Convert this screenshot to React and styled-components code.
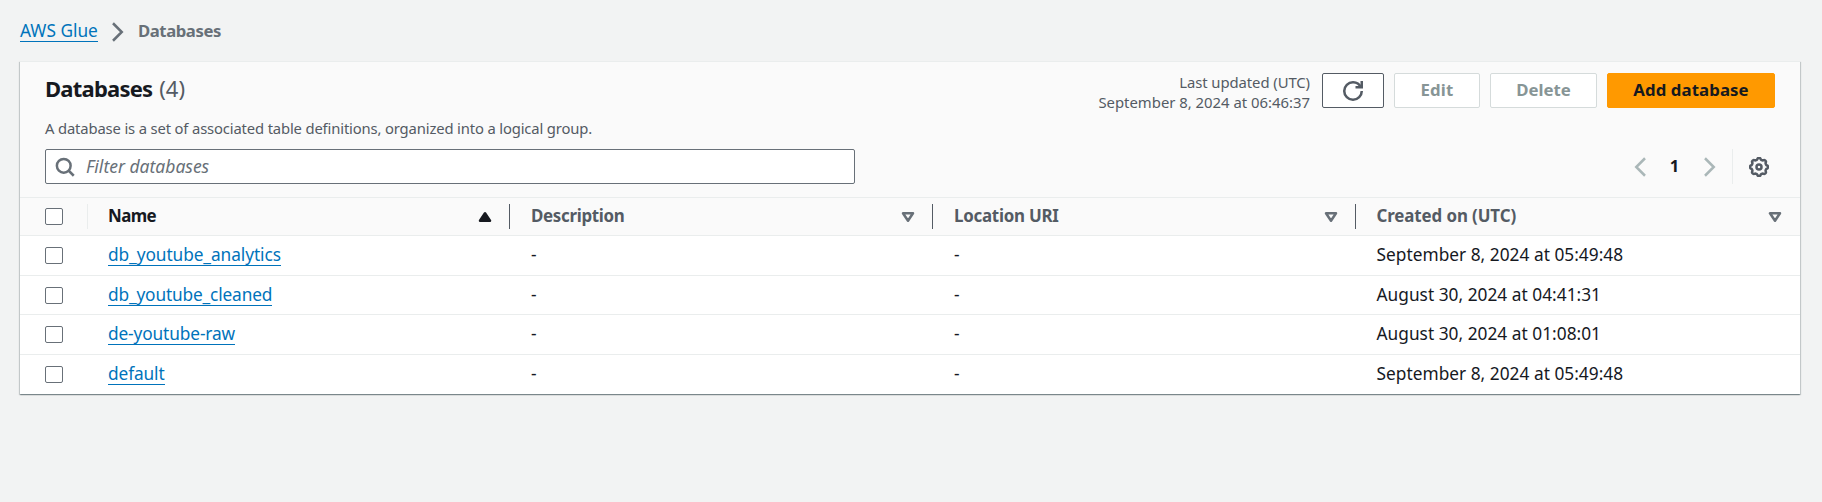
import React from "react";
import styled, { createGlobalStyle } from "styled-components";

const GlobalStyle = createGlobalStyle`
  *, *::before, *::after { box-sizing: border-box; }
  body {
    margin: 0;
    background: #f2f3f3;
    color: #16191f;
    font-family: "Noto Sans", sans-serif;
    font-size: 17.3px;
  }
`;

const Page = styled.main`
  min-height: 502px;
  padding: 0 22px 0 20px;
`;

const Breadcrumbs = styled.nav`
  display: flex;
  align-items: center;
  height: 61px;
  padding-top: 1px;
`;

const Link = styled.a`
  display: inline-block;
  line-height: 21px;
  color: #0073bb;
  border-bottom: 1px solid #0073bb;
  text-decoration: none;
  letter-spacing: ${(p) => p.$track || 0}px;
`;

const Current = styled.span`
  line-height: 22px;
  font-size: 16.7px;
  font-weight: 700;
  letter-spacing: -0.4px;
  color: #687078;
`;

const Icon = styled.svg`
  display: block;
  flex: none;
  width: 20px;
  height: 20px;
  fill: ${(p) => p.$fill || "none"};
  stroke: ${(p) => p.$color || "#545b64"};
  stroke-width: 2;
`;

const CrumbIcon = styled(Icon)`
  margin: 2px 10px 0 10px;
`;

const Card = styled.section`
  height: 333px;
  background: #fff;
  border-top: 1px solid #eaeded;
  box-shadow: 0 1px 1px rgba(0, 28, 36, 0.3), 1px 1px 1px rgba(0, 28, 36, 0.15),
    -1px 1px 1px rgba(0, 28, 36, 0.15);
`;

const CardHeader = styled.header`
  height: 136px;
  padding: 11px 25px 0;
  background: #fafafa;
  border-bottom: 1px solid #eaeded;
`;

const HeaderRow = styled.div`
  display: flex;
  justify-content: space-between;
  height: 45px;
`;

const Title = styled.h1`
  margin: 0;
  font-size: 22px;
  line-height: 31px;
  font-weight: 700;
  letter-spacing: -0.78px;
`;

const Counter = styled.span`
  margin-left: 2px;
  font-weight: 400;
  letter-spacing: 0;
  color: #545b64;
`;

const Actions = styled.div`
  display: flex;
  align-items: flex-start;
  gap: 10px;
`;

const Updated = styled.p`
  margin: -1px 2px 0 0;
  font-size: 14.86px;
  line-height: 20px;
  text-align: right;
  color: #545b64;
`;

const UpdatedLabel = styled.span`
  display: block;
  letter-spacing: -0.08px;
`;

const Button = styled.button`
  display: flex;
  align-items: center;
  justify-content: center;
  width: ${(p) => p.$width}px;
  height: 35px;
  padding: 0 0 2px;
  border: 1px solid ${(p) => (p.$primary ? "#ff9900" : p.disabled ? "#d5dbdb" : "#545b64")};
  border-radius: 2px;
  background: ${(p) => (p.$primary ? "#ff9900" : "#fff")};
  color: ${(p) => (p.disabled ? "#879596" : "#16191f")};
  font: 700 16.8px "Noto Sans", sans-serif;
  letter-spacing: ${(p) => p.$track || 0}px;
`;

const ButtonIcon = styled(Icon)`
  margin-top: 2px;
`;

const Description = styled.p`
  margin: 0;
  font-size: 14.8px;
  line-height: 20px;
  letter-spacing: -0.15px;
  color: #545b64;
`;

const Tools = styled.div`
  display: flex;
  justify-content: space-between;
  align-items: flex-start;
  height: 36px;
  margin-top: 11px;
`;

const Search = styled.label`
  display: flex;
  align-items: center;
  gap: 11px;
  width: 810px;
  height: 35px;
  padding: 0 9px;
  background: #fff;
  border: 1px solid #687078;
  border-radius: 2px;
`;

const SearchInput = styled.input`
  flex: 1;
  height: 31px;
  padding: 0 0 1px;
  border: 0;
  outline: 0;
  background: transparent;
  font: 17.5px "Noto Sans", sans-serif;
  &::placeholder {
    color: #687078;
    opacity: 1;
    font-style: italic;
  }
`;

const Pagination = styled.div`
  display: flex;
  align-items: center;
  height: 35px;
`;

const PageNumber = styled.span`
  width: 49px;
  padding: 0 0 2px;
  text-align: center;
  font-size: 16.5px;
  font-weight: 700;
`;

const Settings = styled.div`
  display: flex;
  align-items: center;
  height: 35px;
  margin-left: 13px;
  padding: 0 6px 0 16px;
  border-left: 1px solid #eaeded;
`;

const Grid = styled.div`
  display: grid;
  grid-template-columns: 68px 422px 423px 423px 1fr;
  align-items: center;
`;

const ColumnRow = styled(Grid)`
  height: 38px;
  background: #fafafa;
  border-bottom: 1px solid #eaeded;
`;

const CheckCell = styled.div`
  display: flex;
  align-items: center;
  height: 25px;
  padding-left: 25px;
  border-right: 1px solid ${(p) => (p.$divider ? "#eaeded" : "transparent")};
`;

const Checkbox = styled.input`
  appearance: none;
  width: 18px;
  height: 17px;
  margin: 0;
  background: #fff;
  border: 1px solid #687078;
  border-radius: 2px;
`;

const ColumnHead = styled.div`
  display: flex;
  align-items: center;
  justify-content: space-between;
  height: 25px;
  padding: 0 ${(p) => (p.$last ? 15 : 14)}px 0 ${(p) => (p.$last ? 20.5 : p.$active ? 20 : 21)}px;
  border-right: ${(p) => (p.$last ? 0 : 1)}px solid #545b64;
`;

const HeadLabel = styled.span`
  padding-bottom: 2px;
  line-height: 23px;
  font-size: 16.9px;
  font-weight: 700;
  letter-spacing: ${(p) => p.$track}px;
  color: ${(p) => (p.$active ? "#16191f" : "#545b64")};
`;

const Cell = styled.div`
  padding: 0 20px 0 21px;
  line-height: 22px;
  white-space: nowrap;
`;

const DateCell = styled(Cell)`
  padding-left: 20.5px;
  letter-spacing: 0.02px;
`;

const NameCell = styled(Cell)`
  padding-left: 20px;
`;

const DataRow = styled(Grid)`
  height: 39px;
  border-bottom: 1px solid #eaeded;
  &:nth-child(odd) { height: 40px; }
  &:last-child { border-bottom: 0; }
  &:nth-child(odd) > ${Cell}, &:last-child > ${Cell},
  &:nth-child(odd) > ${NameCell}, &:last-child > ${NameCell},
  &:nth-child(odd) > ${DateCell}, &:last-child > ${DateCell} {
    padding-bottom: 2px;
  }
`;

const columns = [
  { label: "Name", track: -0.6, active: true },
  { label: "Description", track: -0.3 },
  { label: "Location URI", track: -0.25 },
  { label: "Created on (UTC)", track: -0.1 },
];

const databases = [
  { name: "db_youtube_analytics", track: -0.08, created: "September 8, 2024 at 05:49:48" },
  { name: "db_youtube_cleaned", track: -0.16, created: "August 30, 2024 at 04:41:31" },
  { name: "de-youtube-raw", track: -0.13, created: "August 30, 2024 at 01:08:01" },
  { name: "default", track: -0.12, created: "September 8, 2024 at 05:49:48" },
];

const gearPath = (() => {
  const points = [];
  for (let i = 0; i <= 96; i++) {
    const a = (i / 96) * Math.PI * 2;
    const r = 6.55 + 0.6 * Math.max(-1, Math.min(1, 1.6 * Math.cos(8 * a)));
    points.push(`${(8 + r * Math.cos(a)).toFixed(2)} ${(8 + r * Math.sin(a)).toFixed(2)}`);
  }
  return `M${points.join("L")}Z`;
})();

export default function App() {
  return (
    <>
      <GlobalStyle />
      <Page>
        <Breadcrumbs>
          <Link $track={0}>AWS Glue</Link>
          <CrumbIcon viewBox="0 0 16 16" $color="#687078">
            <path d="M4 1l7 7-7 7" />
          </CrumbIcon>
          <Current>Databases</Current>
        </Breadcrumbs>
        <Card>
          <CardHeader>
            <HeaderRow>
              <Title>
                Databases <Counter>(4)</Counter>
              </Title>
              <Actions>
                <Updated>
                  <UpdatedLabel>Last updated (UTC)</UpdatedLabel>
                  September 8, 2024 at 06:46:37
                </Updated>
                <Button $width={62} aria-label="Refresh">
                  <ButtonIcon viewBox="0 0 16 16">
                    <path d="M10 5h5V0" />
                    <path d="M15 8a6.957 6.957 0 0 1-7 7 6.957 6.957 0 0 1-7-7 6.957 6.957 0 0 1 7-7 6.87 6.87 0 0 1 6.3 4" />
                  </ButtonIcon>
                </Button>
                <Button $width={86} $track={0.2} disabled>Edit</Button>
                <Button $width={107} $track={-0.05} disabled>Delete</Button>
                <Button $width={168} $track={0.1} $primary>Add database</Button>
              </Actions>
            </HeaderRow>
            <Description>
              A database is a set of associated table definitions, organized into a logical group.
            </Description>
            <Tools>
              <Search>
                <Icon viewBox="0 0 16 16" $color="#687078">
                  <circle cx="7" cy="7" r="5.5" />
                  <path d="M15 15l-4.2-4.2" />
                </Icon>
                <SearchInput placeholder="Filter databases" />
              </Search>
              <Pagination>
                <Icon viewBox="0 0 16 16" $color="#aab7b8">
                  <path d="M12 1L5 8l7 7" />
                </Icon>
                <PageNumber>1</PageNumber>
                <Icon viewBox="0 0 16 16" $color="#aab7b8">
                  <path d="M4.8 1l7 7-7 7" />
                </Icon>
                <Settings>
                  <Icon viewBox="0 0 16 16">
                    <path d={gearPath} strokeLinejoin="round" />
                    <circle cx="8" cy="8" r="2" />
                  </Icon>
                </Settings>
              </Pagination>
            </Tools>
          </CardHeader>
          <ColumnRow>
            <CheckCell $divider>
              <Checkbox type="checkbox" />
            </CheckCell>
            {columns.map((c, i) => (
              <ColumnHead key={c.label} $active={c.active} $last={i === columns.length - 1}>
                <HeadLabel $track={c.track} $active={c.active}>{c.label}</HeadLabel>
                <Icon
                  viewBox="0 0 16 16"
                  $color={c.active ? "#16191f" : "#687078"}
                  $fill={c.active ? "#16191f" : "none"}
                >
                  <path d={c.active ? "M4 11h8L8 5l-4 6z" : "M4 5h8l-4 6-4-6z"} strokeLinejoin="round" />
                </Icon>
              </ColumnHead>
            ))}
          </ColumnRow>
          {databases.map((d) => (
            <DataRow key={d.name}>
              <CheckCell>
                <Checkbox type="checkbox" />
              </CheckCell>
              <NameCell>
                <Link $track={d.track}>{d.name}</Link>
              </NameCell>
              <Cell>-</Cell>
              <Cell>-</Cell>
              <DateCell>{d.created}</DateCell>
            </DataRow>
          ))}
        </Card>
      </Page>
    </>
  );
}
